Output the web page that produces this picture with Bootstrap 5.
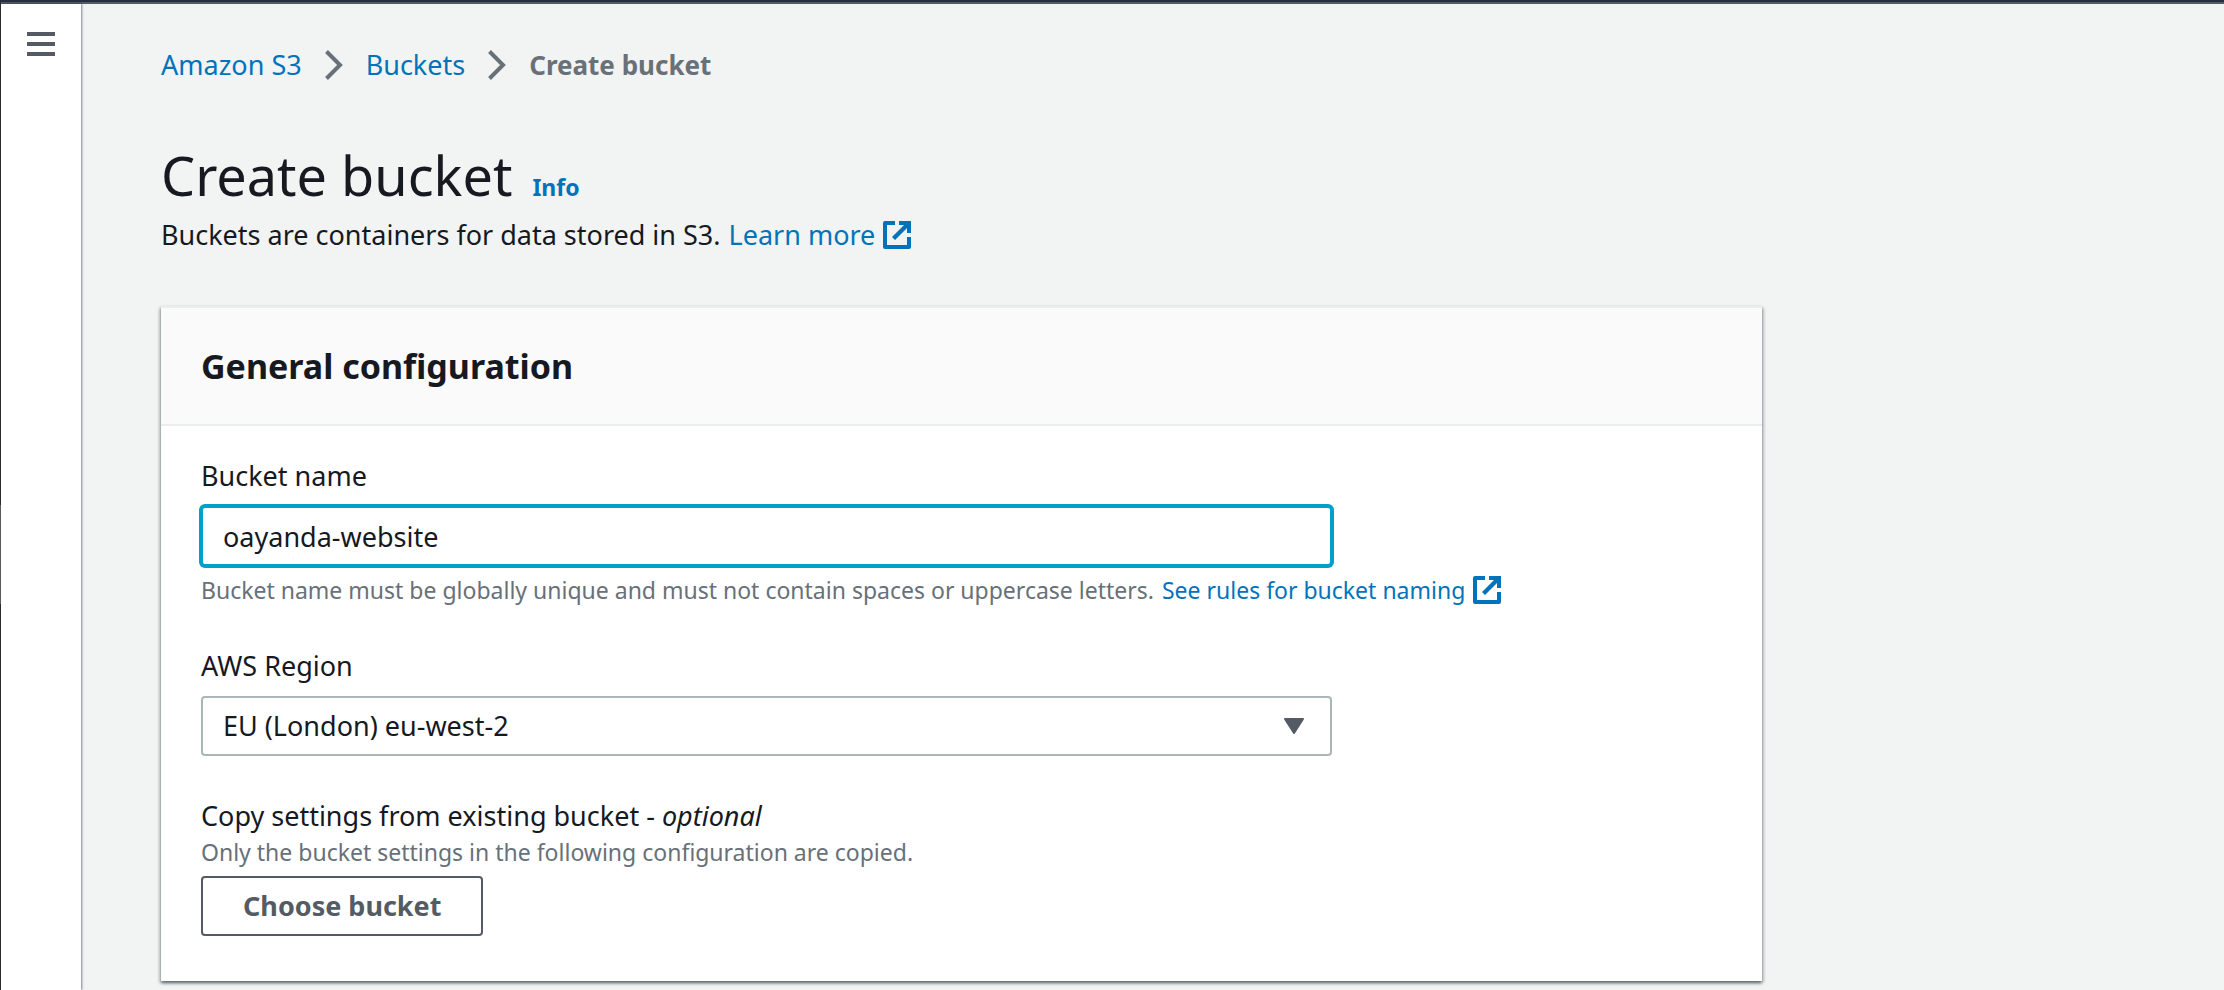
<!DOCTYPE html>
<html lang="en">
<head>
<meta charset="utf-8">
<meta name="viewport" content="width=device-width, initial-scale=1">
<title>Create bucket</title>
<link href="https://cdn.jsdelivr.net/npm/bootstrap@5.3.0/dist/css/bootstrap.min.css" rel="stylesheet">
<style>
:root{--ink:#16191f;--link:#0073bb;--muted-ink:#687078;--slate:#545b64}
body{font-family:"Noto Sans","Open Sans",sans-serif;font-size:27px;line-height:40px;color:var(--ink);background:#f2f3f3;border-left:1px solid #2b2b2d;border-image:linear-gradient(#2b2b2d 51%,#5a5a5c 51% 61%,#2b2b2d 61%) 0 0 0 1}
a{color:var(--link);text-decoration:none}
a:hover{text-decoration:underline}
.top-strip{height:4px;background:#545b64;border-top:2px solid #232f3e}
.side-rail{width:80px;background:#fff;box-shadow:1px 0 2px rgba(0,28,36,.5);padding-top:20px}
.menu-btn{width:44px;height:44px;color:var(--slate)}
.page-body{padding:41px 80px 9px 80px}
.page-column{max-width:1601px}
.crumbs{--bs-breadcrumb-divider:none;gap:23px;margin-bottom:58px}
.crumbs li{padding:0!important}
.crumbs .active{color:var(--muted-ink);font-size:26px}
.title-row{gap:20px;margin-bottom:8px}
.page-title{font-size:54px;line-height:64px;font-weight:400}
.info-link{font-size:23px}
.ext-icon{width:28px;height:28px;flex:none}
.intro{margin-bottom:51px}
.panel{--bs-card-border-radius:0;--bs-card-inner-border-radius:0;--bs-card-border-width:0;color:var(--ink);box-shadow:0 2px 3px rgba(0,28,36,.5),2px 2px 3px rgba(0,28,36,.15),-2px 2px 3px rgba(0,28,36,.15)}
.panel-head{background:#fafafa;border-top:2px solid #eaeded;border-bottom:2px solid #eaeded!important;padding:38px 40px}
.panel-title{font-size:34px;line-height:40px}
.panel-main{padding:30px 40px 45px}
.field{margin-bottom:40px}
.field-row{--bs-gutter-x:40px}
.field-label{margin-bottom:10px}
.hint{font-size:23px;line-height:32px;color:var(--muted-ink)}
.field-box{height:60px;font-size:27px;line-height:40px;padding:0 20px;border:2px solid #aab7b8;border-radius:4px;color:var(--ink)}
.field-box.is-active,.field-box:focus{border-color:#00a1c9;box-shadow:0 0 0 2px #00a1c9;color:var(--ink)}
select.field-box{background-image:url("data:image/svg+xml,%3Csvg xmlns='http://www.w3.org/2000/svg' viewBox='0 0 20 16'%3E%3Cpath d='M1 1h18l-9 14z' fill='%23545b64' stroke='%23545b64' stroke-width='2' stroke-linejoin='round'/%3E%3C/svg%3E");background-size:20px 16px;background-position:right 26px center}
.outline-btn{height:60px;padding:0 40px;font-size:27px;line-height:40px;border:2px solid var(--slate);border-radius:4px;color:var(--slate);background:#fff}
</style>
</head>
<body class="d-flex flex-column min-vh-100">
<svg class="d-none" xmlns="http://www.w3.org/2000/svg">
  <symbol id="external" viewBox="0 0 28 28"><path d="M12 2H2v24h24V16" fill="none" stroke="currentColor" stroke-width="4" stroke-linejoin="round"/><path d="M16 0h12v12h-4V7L12 19l-3-3L21 4h-5z" fill="currentColor"/></symbol>
  <symbol id="chevron" viewBox="0 0 18 30"><path d="M1.500 1.500L15 15L1.500 28.500" fill="none" stroke="currentColor" stroke-width="4"/></symbol>
</svg>
<header class="top-strip"></header>
<div class="d-flex flex-grow-1">
  <nav class="side-rail flex-shrink-0 d-flex justify-content-center align-items-start" aria-label="Services">
    <button type="button" class="menu-btn btn p-0 border-0 d-flex align-items-start justify-content-center pt-2" aria-label="Open navigation">
      <svg width="28" height="24" viewBox="0 0 28 24" fill="currentColor"><path d="M0 0h28v4H0zM0 10h28v4H0zM0 20h28v4H0z"/></svg>
    </button>
  </nav>
  <main class="page-body flex-grow-1">
    <div class="page-column">
      <nav aria-label="breadcrumb">
        <ol class="breadcrumb crumbs align-items-center">
          <li><a href="#">Amazon S3</a></li>
          <li class="d-flex active" aria-hidden="true"><svg width="18" height="30"><use href="#chevron"/></svg></li>
          <li><a href="#">Buckets</a></li>
          <li class="d-flex active" aria-hidden="true"><svg width="18" height="30"><use href="#chevron"/></svg></li>
          <li class="active fw-bold" aria-current="page">Create bucket</li>
        </ol>
      </nav>
      <div class="title-row d-flex align-items-baseline">
        <h1 class="page-title mb-0">Create bucket</h1>
        <a href="#" class="info-link fw-bold">Info</a>
      </div>
      <p class="intro d-flex align-items-center gap-2">Buckets are containers for data stored in S3. <a href="#" class="d-flex align-items-center gap-2">Learn more <svg class="ext-icon"><use href="#external"/></svg></a></p>

      <section class="card panel">
        <div class="card-header panel-head"><h2 class="panel-title fw-bold mb-0">General configuration</h2></div>
        <form class="card-body panel-main">
          <div class="field">
            <label class="field-label d-block" for="bucket-name">Bucket name</label>
            <div class="row field-row"><div class="col-9"><input id="bucket-name" type="text" class="form-control field-box is-active" value="oayanda-website"></div></div>
            <div class="hint d-flex align-items-center gap-2 mt-2">Bucket name must be globally unique and must not contain spaces or uppercase letters. <a href="#" class="d-flex align-items-center gap-2">See rules for bucket naming <svg class="ext-icon"><use href="#external"/></svg></a></div>
          </div>
          <div class="field">
            <label class="field-label d-block" for="region">AWS Region</label>
            <div class="row field-row"><div class="col-9"><select id="region" class="form-select field-box"><option>EU (London) eu-west-2</option></select></div></div>
          </div>
          <div>
            <label class="d-block" for="choose">Copy settings from existing bucket - <i>optional</i></label>
            <div class="hint mb-2">Only the bucket settings in the following configuration are copied.</div>
            <button id="choose" type="button" class="btn outline-btn fw-bold">Choose bucket</button>
          </div>
        </form>
      </section>
    </div>
  </main>
</div>
<script src="https://cdn.jsdelivr.net/npm/bootstrap@5.3.0/dist/js/bootstrap.bundle.min.js"></script>
</body>
</html>
